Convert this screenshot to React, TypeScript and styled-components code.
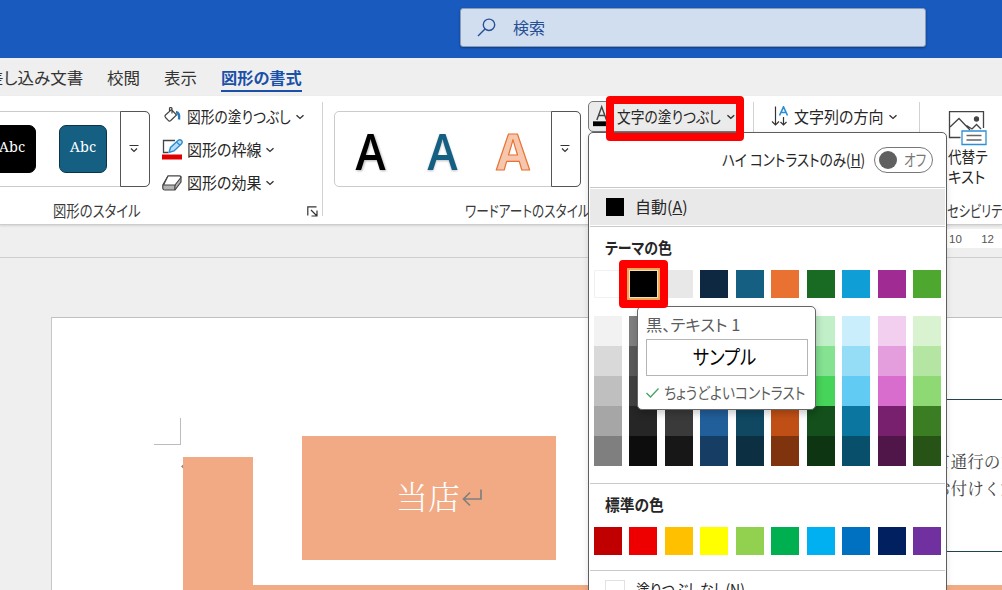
import React, { useLayoutEffect, useRef, useState } from "react";
import styled, { createGlobalStyle } from "styled-components";

const Global = createGlobalStyle`
  * { box-sizing: border-box; }
  body { margin: 0; overflow: hidden; }
`;

const ui = `"Noto Sans CJK JP", "Noto Sans", sans-serif`;

const Window = styled.div`
  width: 1002px;
  height: 590px;
  position: relative;
  overflow: hidden;
  display: flex;
  flex-direction: column;
  background: #efefef;
  color: #262626;
  font-family: ${ui};
  font-size: 16px;
`;

/* ---------- label squeezed to the narrow proportions of the UI face ---------- */
const LabelBox = styled.span<{ $w: number; $size?: number; $color?: string; $bold?: boolean }>`
  display: inline-block;
  flex: none;
  width: ${(p) => p.$w}px;
  white-space: nowrap;
  font-size: ${(p) => p.$size ?? 16}px;
  line-height: 20px;
  font-weight: ${(p) => (p.$bold ? 700 : 400)};
  color: ${(p) => p.$color ?? "inherit"};
  font-feature-settings: "palt";
`;
const LabelInner = styled.span`
  display: inline-block;
  transform-origin: 0 50%;
`;

type LabelProps = { w: number; size?: number; color?: string; bold?: boolean; children: React.ReactNode };
function Label({ w, size, color, bold, children }: LabelProps) {
  const ref = useRef<HTMLSpanElement>(null);
  const [scale, setScale] = useState(1);
  useLayoutEffect(() => {
    if (ref.current) setScale(w / ref.current.offsetWidth);
  }, [w]);
  return (
    <LabelBox $w={w} $size={size} $color={color} $bold={bold}>
      <LabelInner ref={ref} style={{ transform: `translateY(-1px) scaleX(${scale})` }}>{children}</LabelInner>
    </LabelBox>
  );
}

/* ---------- title bar ---------- */
const TitleBar = styled.header`
  flex: none;
  height: 58px;
  padding: 8px 0 0 460px;
  background: #185abd;
`;
const Search = styled.div`
  width: 466px;
  height: 39px;
  display: flex;
  align-items: center;
  gap: 16px;
  padding-left: 16px;
  background: #d1deef;
  border: 1px solid #8c9bb5;
  border-radius: 3px;
  box-shadow: 0 1px 2px #0c3d85;
`;

/* ---------- tabs ---------- */
const Tabs = styled.nav`
  flex: none;
  height: 38px;
  display: flex;
  padding-top: 10px;
  gap: 24px;
  margin-left: -13px;
`;
const Tab = styled.div<{ $active?: boolean }>`
  height: 24px;
  color: ${(p) => (p.$active ? "#1a50a8" : "#333")};
  border-bottom: ${(p) => (p.$active ? "2px solid #1a50a8" : "none")};
  display: flex;
`;

/* ---------- ribbon ---------- */
const Ribbon = styled.section`
  flex: none;
  height: 129px;
  display: flex;
  background: #fff;
  border-bottom: 1px solid #cdcdcd;
  box-shadow: 0 1px 2px #d4d4d4;
`;
const Group = styled.div<{ $w: number; $pad?: string }>`
  flex: none;
  width: ${(p) => p.$w}px;
  padding: ${(p) => p.$pad ?? "0"};
  display: flex;
  flex-direction: column;
`;
const Divider = styled.div`
  flex: none;
  width: 1px;
  height: 114px;
  margin-top: 6px;
  background: #d2d2d2;
`;
const GroupBody = styled.div`
  height: 105px;
  display: flex;
  align-items: flex-start;
`;
const GroupCaption = styled.div<{ $left: number }>`
  height: 20px;
  padding: 0 4px 0 ${(p) => p.$left}px;
  display: flex;
  align-items: center;
  justify-content: space-between;
  color: #3a3a3a;
`;
const Gallery = styled.div<{ $w: number; $open?: boolean }>`
  width: ${(p) => p.$w}px;
  height: 76px;
  margin-top: 15px;
  display: flex;
  align-items: center;
  border: 1px solid #cbcbcb;
  border-left-width: ${(p) => (p.$open ? 0 : 1)}px;
  border-radius: ${(p) => (p.$open ? "0 5px 5px 0" : "5px")};
`;
const MoreButton = styled.div`
  width: 30px;
  height: 76px;
  margin: 0 -1px 0 auto;
  padding-right: 2px;
  display: flex;
  align-items: center;
  justify-content: center;
  border: 1px solid #555;
  border-radius: 0 5px 5px 0;
`;
const StyleTile = styled.div<{ $bg: string; $edge: string; $ml?: number }>`
  width: 48px;
  height: 48px;
  margin-left: ${(p) => p.$ml ?? 0}px;
  padding-bottom: 6px;
  display: flex;
  align-items: center;
  justify-content: center;
  background: ${(p) => p.$bg};
  border: 1px solid ${(p) => p.$edge};
  border-radius: 7px;
  color: #fff;
  font: 14.5px "Noto Serif", "Liberation Serif", serif;
`;
const Commands = styled.div`
  margin: 4px 0 0 12px;
  display: flex;
  flex-direction: column;
`;
const Command = styled.div`
  height: 33px;
  display: flex;
  align-items: center;
  gap: 4px;
`;
const ArtRow = styled.svg`
  display: block;
  flex: none;
`;
const FillButton = styled.div`
  width: 153px;
  height: 31px;
  margin: 5px 0 0 7px;
  padding: 0 4px;
  display: flex;
  align-items: center;
  background: #ebebeb;
  border: 1px solid #777;
  border-radius: 5px;
`;
const FillText = styled.div`
  margin: 0 5px 0 7px;
  display: flex;
`;
const TextTools = styled.div`
  display: flex;
  align-items: center;
  gap: 5px;
  height: 32px;
  margin: 5px 0 0 17px;
`;
const AltText = styled.div`
  display: flex;
  flex-direction: column;
  padding: 15px 0 0 28px;
`;

/* ---------- document ---------- */
const Ruler = styled.div`
  flex: none;
  height: 33px;
  border-bottom: 1px solid #cfcfcf;
  display: flex;
  justify-content: flex-end;
  padding-top: 4px;
`;
const RulerScale = styled.div`
  width: 55px;
  height: 19px;
  padding: 0 8px 0 2px;
  display: flex;
  justify-content: space-between;
  background: #fff;
  color: #555;
  font: 11.5px/20px "Liberation Sans", sans-serif;
`;
const Sheet = styled.main`
  flex: 1;
  position: relative;
  margin: 59px 0 0 51px;
  background: #fff;
  border: 1px solid #c6c6c6;
  border-width: 1px 0 0 1px;
  border-top-color: #c0c0c0;
`;
const Shape = styled.div<{ $x: number; $y: number; $w: number; $h: number }>`
  position: absolute;
  left: ${(p) => p.$x - 52}px;
  top: ${(p) => p.$y - 318}px;
  width: ${(p) => p.$w}px;
  height: ${(p) => p.$h}px;
`;
const Block = styled(Shape)`
  background: #f1aa84;
  display: flex;
  align-items: center;
  color: #fff;
`;
const CropMark = styled(Shape)`
  border: solid #bcbcbc;
  border-width: 0 1.5px 1.5px 0;
`;
const Rule = styled(Shape)`
  background: #214550;
`;
const BodyText = styled(Shape)`
  color: #444;
  white-space: nowrap;
  font: 400 16.6px/24px "Noto Serif CJK JP", "Noto Sans CJK JP", serif;
`;
const StoreName = styled.span`
  margin: -7px 1px 0 94px;
  font: 300 32px/40px "Noto Serif CJK JP", "Noto Sans CJK JP", serif;
`;

/* ---------- colour menu ---------- */
const Menu = styled.div`
  position: absolute;
  left: 588px;
  top: 132px;
  width: 359px;
  height: 470px;
  display: flex;
  flex-direction: column;
  padding: 0 1px;
  background: #fff;
  border: 1px solid #5e5e5e;
  border-radius: 5px 5px 0 0;
  box-shadow: 0 2px 6px rgba(0, 0, 0, 0.12);

  & > * {
    flex: none;
  }
`;
const ContrastRow = styled.div`
  height: 55px;
  padding: 0 0 0 132px;
  display: flex;
  align-items: center;
  gap: 9px;
  border-bottom: 1px solid #c9c9c9;
`;
const Toggle = styled.div`
  width: 59px;
  height: 26px;
  padding-left: 4px;
  display: flex;
  align-items: center;
  gap: 7px;
  border: 1.5px solid #777;
  border-radius: 13px;
`;
const Knob = styled.div`
  width: 18px;
  height: 18px;
  border-radius: 50%;
  background: #606060;
`;
const AutoRow = styled.div`
  height: 36px;
  margin: 1px 0;
  padding-left: 16px;
  display: flex;
  align-items: center;
  gap: 11px;
  background: #e9e9e9;
`;
const Line = styled.div`
  height: 1px;
  background: #c9c9c9;
`;
const Chip = styled.div<{ $c: string; $edge?: string }>`
  width: 18px;
  height: 18px;
  background: ${(p) => p.$c};
  outline: ${(p) => (p.$edge ? `1px solid ${p.$edge}` : "none")};
`;
const Heading = styled.div`
  height: 43px;
  padding: 0 0 1px 15px;
  display: flex;
  align-items: center;
`;
const Palette = styled.div<{ $row: string; $mt?: number; $mb?: number }>`
  display: grid;
  grid-template-columns: repeat(10, 28px);
  grid-auto-rows: ${(p) => p.$row};
  column-gap: 7.45px;
  margin: ${(p) => p.$mt ?? 0}px 0 ${(p) => p.$mb ?? 0}px 4px;
`;
const Swatch = styled.div<{ $c: string }>`
  background: ${(p) => p.$c};
  box-shadow: ${(p) => (p.$c === "#ffffff" ? "inset 0 0 0 1px #f1f1f1" : "none")};
`;
const NoFillRow = styled.div`
  height: 38px;
  padding: 1px 0 0 16px;
  display: flex;
  align-items: center;
  gap: 12px;
`;

const Tip = styled.div`
  position: absolute;
  left: 637px;
  top: 306px;
  width: 179px;
  height: 104px;
  padding: 8px 7px 0 8px;
  display: flex;
  flex-direction: column;
  background: #fff;
  border: 1px solid #666;
  border-radius: 5px;
  box-shadow: 1px 4px 7px rgba(0, 0, 0, 0.2);
  color: #5c5c5c;
`;
const Sample = styled.div`
  height: 38px;
  margin-top: 4px;
  padding-right: 5px;
  display: flex;
  align-items: center;
  justify-content: center;
  border: 1px solid #b5b5b5;
`;
const Verdict = styled.div`
  height: 33px;
  display: flex;
  align-items: center;
  gap: 4px;
`;
const Callout = styled.div<{ $x: number; $y: number; $w: number; $h: number }>`
  position: absolute;
  left: ${(p) => p.$x}px;
  top: ${(p) => p.$y}px;
  width: ${(p) => p.$w}px;
  height: ${(p) => p.$h}px;
  border: 8px solid #fe0000;
  border-radius: 4px;
`;
const Selected = styled.div`
  width: 33px;
  height: 32px;
  border: 2px solid #eda955;
  background: #000;
  box-shadow: inset 0 0 0 1px #f7dcb4;
`;

/* ---------- icons ---------- */
const Chevron = () => (
  <svg width="10" height="8" viewBox="0 0 10 8" fill="none" stroke="#333" strokeWidth="1.4">
    <path d="M1.5 2.2 5 5.4 8.500 2.200" />
  </svg>
);
const MoreIcon = () => (
  <svg width="10" height="10" viewBox="0 0 10 10" fill="none" stroke="#333" strokeWidth="1.200">
    <path d="M0.500 1.500H9.500M2 4.500 5 7.500 8 4.500" />
  </svg>
);
const BucketIcon = () => (
  <svg width="21" height="20" viewBox="0 0 21 20" fill="none" stroke="#444" strokeWidth="1.200">
    <path d="M3.500 8 9.500 2.500 14.500 8 8.500 13.800Q7.500 14.500 6.700 13.800L3.500 10.500Q2.500 9.200 3.500 8M7.500 4.500V1.500Q7.500 0.500 8.700 0.500T10 1.500V6.500" />
    <path d="M14 5Q18 6 17 12.500" stroke="#2878b8" strokeWidth="2.400" />
  </svg>
);
const OutlineIcon = () => (
  <svg width="21" height="21" viewBox="0 0 21 21" fill="none">
    <path d="M13 1.500H1.500V13.500H6" stroke="#444" strokeWidth="1.300" />
    <path d="M7 13.500 8.500 8.500 16 1.500Q18 0 19.500 1.500T19.300 5L12 12Z" fill="#b8def5" stroke="#2f8ad0" strokeWidth="1.400" />
    <path d="M14.500 3 18 6.200" stroke="#2f8ad0" strokeWidth="1.200" />
    <path d="M0 15.500H20V20.500H0Z" fill="#e00000" />
  </svg>
);
const EffectsIcon = () => (
  <svg width="21" height="18" viewBox="0 0 21 18" strokeLinejoin="round" stroke="#444" strokeWidth="1.200">
    <path d="M0.800 11 6 2H17.500Q19.500 2 19 4.500V8L13 16H3Q0.500 16 0.800 13Z" fill="#b4b4b4" />
    <path d="M6 2H17.500Q19.300 2.300 18.500 4L13 11H1.500Z" fill="#fff" />
    <path d="M13 11 12.800 16" />
  </svg>
);
const LauncherIcon = () => (
  <svg width="11" height="11" viewBox="0 0 11 11" fill="none" stroke="#333" strokeWidth="1.200">
    <path d="M0.800 9.500V0.800H9.500M4 4 9.500 9.500M10 4.500V10H4.500" />
  </svg>
);
const SearchIcon = () => (
  <svg width="20" height="20" viewBox="0 0 20 20" fill="none" stroke="#264f94" strokeWidth="1.400">
    <circle cx="12" cy="6.800" r="5.700" />
    <path d="M8 11 1 18" />
  </svg>
);
const DirectionIcon = () => (
  <svg width="18" height="22" viewBox="0 0 18 22" fill="none" stroke="#333" strokeWidth="1.200">
    <path d="M4.500 0.500V19M1 15.500 4.500 19 8 15.500M12.500 11V19M9.500 16 12.500 19 15.500 16" />
    <path d="M8.500 9.500 12.500 0.800 16.500 9.500M10 6.500H15" stroke="#2b8fd6" strokeWidth="1.600" />
  </svg>
);
const PictureIcon = () => (
  <svg width="40" height="36" viewBox="0 0 40 36" fill="none" stroke="#444" strokeWidth="1.300">
    <path d="M12.500 26.500H1.500V0.700H35.500V17" />
    <path d="M2 16 11 7.500 22 19M18.500 14.500 24 18 28.500 13.500 33 18" />
    <circle cx="28.500" cy="8" r="2" fill="#444" />
    <path d="M14 20H38V33.500H14Z" fill="#fff" stroke="#2b8fd6" />
    <path d="M18.500 24.500H33.500M18.500 29H33.500" stroke="#666" />
  </svg>
);
const CheckIcon = () => (
  <svg width="14" height="12" viewBox="0 0 14 12" fill="none" stroke="#45a268" strokeWidth="1.300">
    <path d="M0.500 6 4.500 10 12.500 1.500" />
  </svg>
);
const ReturnIcon = () => (
  <svg width="21" height="18" viewBox="0 0 21 18" fill="none" stroke="#808080" strokeWidth="1.700">
    <path d="M20 0.500V10H2M9 3.500 2.500 10 9 16.500" />
  </svg>
);

const theme = ["#ffffff", "#000000", "#e8e8e8", "#0e2841", "#156082", "#e97132", "#196b24", "#0f9ed5", "#a02b93", "#4ea72e"];
const tints = [
  ["#f2f2f2", "#7f7f7f", "#d1d1d1", "#dceaf7", "#c1e4f5", "#fbe3d6", "#c1f0c8", "#caeefb", "#f2cfee", "#d9f2d0"],
  ["#d9d9d9", "#595959", "#aeaeae", "#a6caec", "#83cbeb", "#f6c6ad", "#84e291", "#95dcf7", "#e59edd", "#b4e5a2"],
  ["#bfbfbf", "#404040", "#747474", "#4e95d9", "#46b1e1", "#f2aa84", "#47d45a", "#61cbf4", "#d86dcd", "#8ed973"],
  ["#a6a6a6", "#262626", "#3a3a3a", "#215f9a", "#104862", "#c04f15", "#13501b", "#0b769f", "#78206e", "#3b7d23"],
  ["#7f7f7f", "#0d0d0d", "#171717", "#163e64", "#0c3042", "#80340e", "#0d3512", "#074f6a", "#501549", "#275317"],
];
const standard = ["#c00000", "#ee0000", "#ffc000", "#ffff00", "#92d050", "#00b050", "#00b0f0", "#0070c0", "#002060", "#7030a0"];

export default function App() {
  return (
    <Window>
      <Global />
      <TitleBar>
        <Search>
          <SearchIcon />
          <Label w={32} color="#264f94">検索</Label>
        </Search>
      </TitleBar>

      <Tabs>
        <Tab><Label w={96}>差し込み文書</Label></Tab>
        <Tab><Label w={33}>校閲</Label></Tab>
        <Tab><Label w={33}>表示</Label></Tab>
        <Tab $active><Label w={81} bold>図形の書式</Label></Tab>
      </Tabs>

      <Ribbon>
        <Group $w={322}>
          <GroupBody>
            <Gallery $w={150} $open>
              <StyleTile $bg="#000" $edge="#000" $ml={-12}>Abc</StyleTile>
              <StyleTile $bg="#156082" $edge="#0c3448" $ml={23}>Abc</StyleTile>
              <MoreButton><MoreIcon /></MoreButton>
            </Gallery>
            <Commands>
              <Command><BucketIcon /><Label w={104}>図形の塗りつぶし</Label><Chevron /></Command>
              <Command><OutlineIcon /><Label w={74}>図形の枠線</Label><Chevron /></Command>
              <Command><EffectsIcon /><Label w={74}>図形の効果</Label><Chevron /></Command>
            </Commands>
          </GroupBody>
          <GroupCaption $left={53}>
            <Label w={88} size={15.5}>図形のスタイル</Label>
            <LauncherIcon />
          </GroupCaption>
        </Group>
        <Divider />
        <Group $w={430} $pad="0 0 0 11px">
          <GroupBody>
            <Gallery $w={247}>
              <ArtRow width="214" height="74" viewBox="0 0 214 74" fontFamily="'Open Sans', 'Noto Sans', sans-serif" fontSize="50" textAnchor="middle" strokeLinejoin="round">
                <text transform="translate(35.500 57.500) scale(0.910 1)" fill="#000" fontWeight="600" filter="drop-shadow(1px 1px 1px rgba(0,0,0,.3))">A</text>
                <text transform="translate(107.500 57.500) scale(0.910 1)" fill="#156082" fontWeight="600" filter="drop-shadow(0px 1.5px 1px rgba(0,0,0,.25))">A</text>
                <text transform="translate(178 57.500) scale(0.970 1)" fill="#f6c6ad" stroke="#e97132" strokeWidth="1.200" fontWeight="700">A</text>
              </ArtRow>
              <MoreButton><MoreIcon /></MoreButton>
            </Gallery>
            <FillButton>
              <svg width="18" height="26" viewBox="0 0 18 26">
                <path d="M4 16 9 2.500 14 16M5.500 11.500H12.500" fill="none" stroke="#444" strokeWidth="1.500" />
                <path d="M0 17.500H18V22.500H0Z" fill="#000" />
              </svg>
              <FillText><Label w={104}>文字の塗りつぶし</Label></FillText>
              <Chevron />
            </FillButton>
          </GroupBody>
          <GroupCaption $left={131}><Label w={125} size={15.5}>ワードアートのスタイル</Label></GroupCaption>
        </Group>
        <Divider />
        <Group $w={165}>
          <TextTools><DirectionIcon /><Label w={89}>文字列の方向</Label><Chevron /></TextTools>
        </Group>
        <Divider />
        <Group $w={82}>
          <GroupBody>
            <AltText>
              <PictureIcon />
              <Label w={40}>代替テ</Label>
              <Label w={37}>キスト</Label>
            </AltText>
          </GroupBody>
          <GroupCaption $left={27}><Label w={64} size={15.5}>セシビリティ</Label></GroupCaption>
        </Group>
      </Ribbon>

      <Ruler><RulerScale><span>10</span><span>12</span></RulerScale></Ruler>

      <Sheet>
        <CropMark $x={154} $y={418} $w={27} $h={27} />
        <Shape $x={181} $y={453} $w={12} $h={12}>
          <svg width="12" height="12" viewBox="0 0 12 12" fill="none" stroke="#888" strokeWidth="1.300">
            <path d="M8.500 2V6.500H1M4 3.500 1 6.500 4 9.500" />
          </svg>
        </Shape>
        <Block $x={183} $y={457} $w={70} $h={140} />
        <Block $x={183} $y={585} $w={819} $h={10} />
        <Block $x={302} $y={436} $w={254} $h={124}>
          <StoreName>当店</StoreName>
          <ReturnIcon />
        </Block>
        <Rule $x={940} $y={399} $w={62} $h={1} />
        <Rule $x={940} $y={551} $w={62} $h={1} />
        <BodyText $x={934} $y={449} $w={80} $h={24}>て通行のた</BodyText>
        <BodyText $x={934} $y={476} $w={80} $h={24}>お付けくだ</BodyText>
      </Sheet>

      <Menu>
        <ContrastRow>
          <Label w={143}>ハイ コントラストのみ(<u>H</u>)</Label>
          <Toggle><Knob /><Label w={22} color="#777">オフ</Label></Toggle>
        </ContrastRow>
        <AutoRow><Chip $c="#000" /><Label w={53}>自動(<u>A</u>)</Label></AutoRow>
        <Line />
        <Heading><Label w={67} bold>テーマの色</Label></Heading>
        <Palette $row="28px">{theme.map((c) => <Swatch key={c} $c={c} />)}</Palette>
        <Palette $row="30.1px" $mt={18} $mb={16.5}>
          {tints.flatMap((row, i) => row.map((c, j) => <Swatch key={`${i}-${j}`} $c={c} />))}
        </Palette>
        <Line />
        <Heading><Label w={59} bold>標準の色</Label></Heading>
        <Palette $row="28px" $mb={15}>{standard.map((c) => <Swatch key={c} $c={c} />)}</Palette>
        <Line />
        <NoFillRow><Chip $c="#fff" $edge="#e2e2e2" /><Label w={109}>塗りつぶしなし(<u>N</u>)</Label></NoFillRow>
      </Menu>

      <Tip>
        <Label w={94}>黒、テキスト 1</Label>
        <Sample><Label w={63} size={20} color="#000">サンプル</Label></Sample>
        <Verdict><CheckIcon /><Label w={141}>ちょうどよいコントラスト</Label></Verdict>
      </Tip>

      <Callout $x={606} $y={96} $w={138} $h={45} />
      <Callout $x={619} $y={260} $w={49} $h={48}><Selected /></Callout>
    </Window>
  );
}
